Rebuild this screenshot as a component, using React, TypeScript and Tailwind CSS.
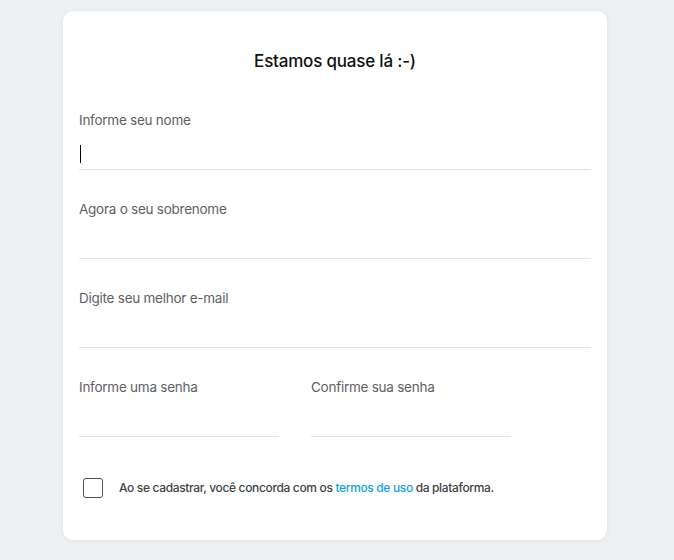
import React from "react";

export default function App() {
  return (
    <div
      className="min-h-[560px] w-full bg-[#eef1f3] pt-[11px]"
      style={{ fontFamily: "Inter, 'Noto Sans', sans-serif" }}
    >
      <div className="ml-[63px] w-[544px] rounded-[10px] bg-white px-4 pt-[38px] pb-[42px] shadow-[0_1px_6px_rgba(0,0,0,0.06)]">
        <h1 className="text-center text-[17px] leading-6 font-medium tracking-[-0.2px] text-[#111]">
          Estamos quase lá :-)
        </h1>
        <div className="mt-[37px] flex flex-col gap-[29px]">
          <Field label="Informe seu nome" focused />
          <Field label="Agora o seu sobrenome" />
          <Field label="Digite seu melhor e-mail" />
          <div className="flex gap-8">
            <div className="w-[200px]">
              <Field label="Informe uma senha" />
            </div>
            <div className="w-[200px]">
              <Field label="Confirme sua senha" />
            </div>
          </div>
        </div>
        <div className="mt-[41px] flex items-center pl-1">
          <div className="h-5 w-5 rounded-[3px] border border-[#4a4f63]" />
          <p className="ml-4 text-[12px] leading-5 font-medium tracking-[-0.35px] text-[#3e4347]">
            Ao se cadastrar, você concorda com os{" "}
            <span className="text-[#14a3dc]">termos de uso</span> da plataforma.
          </p>
        </div>
      </div>
    </div>
  );
}

function Field({ label, focused }: { label: string; focused?: boolean }) {
  return (
    <div className="flex flex-col">
      <label className="text-[13.5px] leading-5 tracking-[-0.25px] text-[#5d6165]">{label}</label>
      <div className="flex h-[40px] items-center border-b border-[#e4e4e4]">
        {focused && <div className="mt-[8px] ml-[1px] h-[18px] w-[1px] bg-black" />}
      </div>
    </div>
  );
}
